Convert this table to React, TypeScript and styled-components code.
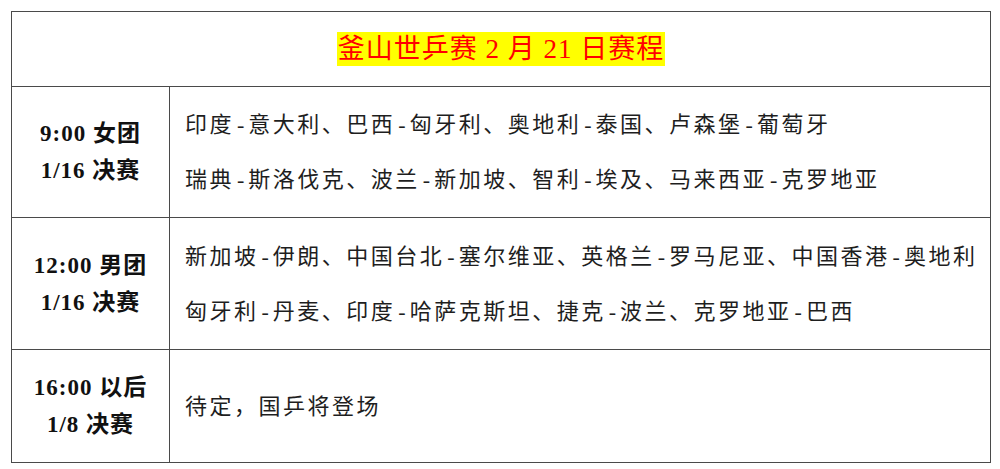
import React from "react";
import styled, { createGlobalStyle } from "styled-components";

const Global = createGlobalStyle`
  html, body { margin: 0; padding: 0; background: #ffffff; }
  body { font-family: "Liberation Serif", "Noto Sans CJK SC", serif; }
`;

const Page = styled.div`
  padding: 11px 0 0 11px;
`;

const Table = styled.table`
  width: 980px;
  border-collapse: collapse;
  table-layout: fixed;
  border: 1px solid #4a4a4a;
`;

const Col = styled.col<{ $w?: number }>`
  width: ${(p) => (p.$w ? `${p.$w}px` : "auto")};
`;

const Row = styled.tr<{ $h: number }>`
  height: ${(p) => p.$h}px;
`;

const TitleCell = styled.td`
  border: 1px solid #4a4a4a;
  text-align: center;
  vertical-align: middle;
  padding: 0;
`;

const Title = styled.span`
  font-family: "Liberation Serif", "Noto Sans CJK SC", serif;
  font-size: 27px;
  letter-spacing: 1px;
  color: #ff0000;
  background: #ffff00;
  padding: 2px 1px;
  line-height: 36px;
`;

const TimeCell = styled.td`
  border: 1px solid #4a4a4a;
  text-align: center;
  vertical-align: middle;
  padding: 0;
  font-size: 23px;
  font-weight: 700;
  line-height: 37px;
  color: #111;
  letter-spacing: 1px;
`;

const MatchCell = styled.td`
  border: 1px solid #4a4a4a;
  vertical-align: middle;
  padding: 0 0 0 15px;
  font-size: 22px;
  line-height: 55px;
  letter-spacing: 2.5px;
  color: #1e1e1e;
  white-space: nowrap;
  overflow: hidden;
`;

const Line = styled.div``;

const Dash = styled.span`
  letter-spacing: 4px;
  margin-left: 3px;
`;

type Item = { time: string[]; h: number; lines: string[] };

const items: Item[] = [
  {
    time: ["9:00 女团", "1/16 决赛"],
    h: 131,
    lines: [
      "印度-意大利、巴西-匈牙利、奥地利-泰国、卢森堡-葡萄牙",
      "瑞典-斯洛伐克、波兰-新加坡、智利-埃及、马来西亚-克罗地亚",
    ],
  },
  {
    time: ["12:00 男团", "1/16 决赛"],
    h: 132,
    lines: [
      "新加坡-伊朗、中国台北-塞尔维亚、英格兰-罗马尼亚、中国香港-奥地利",
      "匈牙利-丹麦、印度-哈萨克斯坦、捷克-波兰、克罗地亚-巴西",
    ],
  },
  {
    time: ["16:00 以后", "1/8 决赛"],
    h: 113,
    lines: ["待定，国乒将登场"],
  },
];

function MatchLine({ text }: { text: string }) {
  const parts = text.split("-");
  return (
    <Line>
      {parts.map((p, i) => (
        <React.Fragment key={i}>
          {i > 0 && <Dash>-</Dash>}
          {p}
        </React.Fragment>
      ))}
    </Line>
  );
}

export default function App() {
  return (
    <Page>
      <Global />
      <Table>
        <colgroup>
          <Col $w={158} />
          <Col />
        </colgroup>
        <tbody>
          <Row $h={75}>
            <TitleCell colSpan={2}>
              <Title>釜山世乒赛 2 月 21 日赛程</Title>
            </TitleCell>
          </Row>
          {items.map((it, i) => (
            <Row $h={it.h} key={i}>
              <TimeCell>
                {it.time.map((t, j) => (
                  <Line key={j}>{t}</Line>
                ))}
              </TimeCell>
              <MatchCell>
                {it.lines.map((l, j) => (
                  <MatchLine key={j} text={l} />
                ))}
              </MatchCell>
            </Row>
          ))}
        </tbody>
      </Table>
    </Page>
  );
}
